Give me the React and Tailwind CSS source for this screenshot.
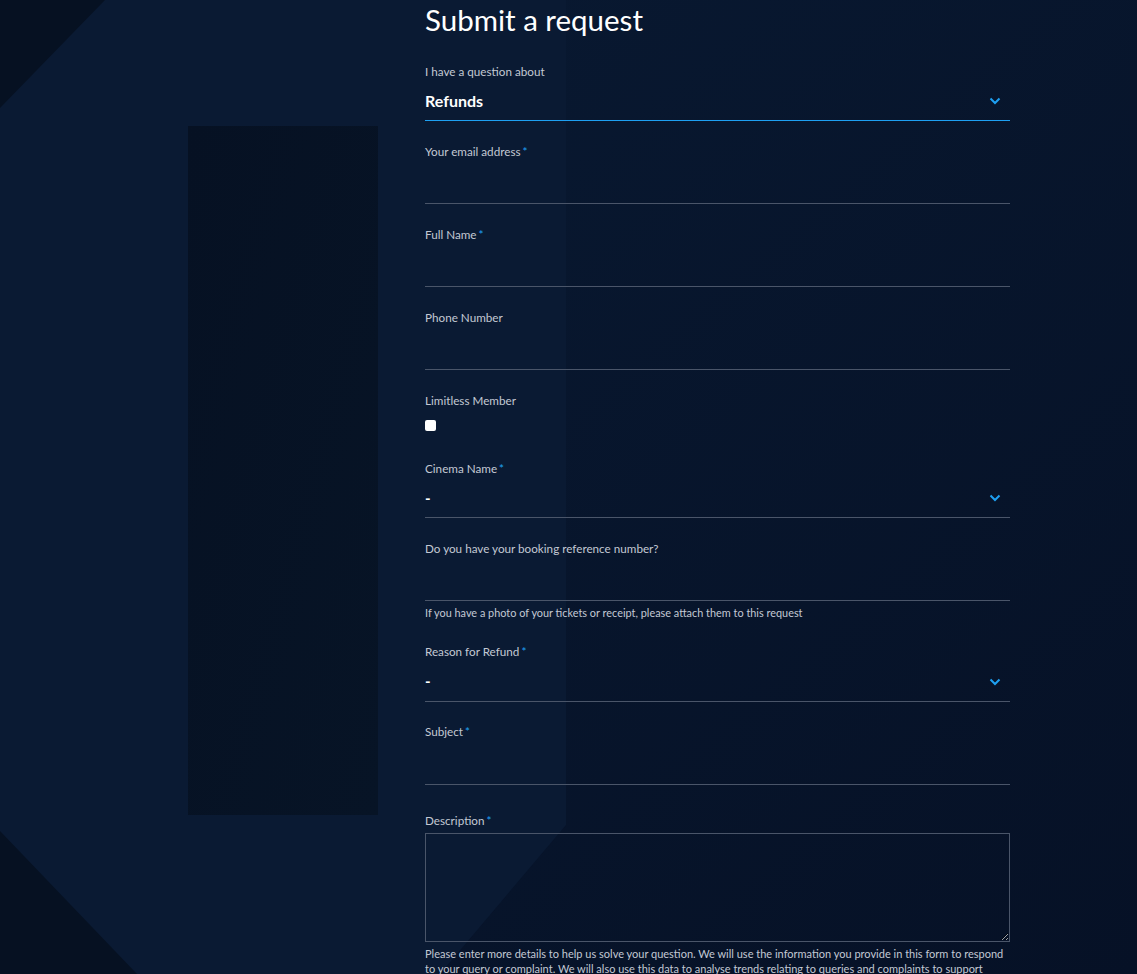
import React from "react";

const font = { fontFamily: "Lato, 'Noto Sans', sans-serif" };

function Chevron() {
  return (
    <svg width="12" height="8" viewBox="0 0 12 8" className="shrink-0">
      <polyline points="1.5,1.5 6,6 10.5,1.5" fill="none" stroke="#1ea0f2" strokeWidth="2" />
    </svg>
  );
}

function Label({ children, required }) {
  return (
    <label className="-mt-[1px] mb-[1px] block h-4 text-[11.7px] leading-4 text-[#c3c9d4]">
      {children}
      {required && <span className="ml-[2px] text-[#1ea0f2]">*</span>}
    </label>
  );
}

function TextField({ label, required }) {
  return (
    <div className="mb-[23px]">
      <Label required={required}>{label}</Label>
      <input type="text" className="block h-[44px] w-full border-b border-[#4a5569] bg-transparent text-white outline-none" />
    </div>
  );
}

function SelectField({ label, required, value, bold, blue, h = "h-[41px]" }) {
  return (
    <div className="mb-[23px]">
      <Label required={required}>{label}</Label>
      <div className={`flex ${h} w-full items-center justify-between pr-[9px] pt-[2px] ${blue ? "border-b border-[#1ea0f2]" : "border-b border-[#4a5569]"}`}>
        <span className={bold ? "text-[16px] font-bold text-white" : "text-[15px] font-bold text-white"}>{value}</span>
        <Chevron />
      </div>
    </div>
  );
}

export default function App() {
  return (
    <div className="relative min-h-[974px] w-full overflow-hidden bg-[#07152c]" style={font}>
      <svg className="absolute inset-0" width="1137" height="974" viewBox="0 0 1137 974" preserveAspectRatio="none">
        <defs>
          <linearGradient id="bg" x1="0" y1="0" x2="1" y2="1">
            <stop offset="0" stopColor="#091a33" />
            <stop offset="1" stopColor="#061126" />
          </linearGradient>
          <linearGradient id="rect" x1="0" y1="0" x2="1" y2="1">
            <stop offset="0" stopColor="#061123" />
            <stop offset="1" stopColor="#071426" />
          </linearGradient>
        </defs>
        <rect x="0" y="0" width="1137" height="974" fill="url(#bg)" />
        <polygon points="0,0 566,0 566,825 440,974 0,974" fill="#0a1a33" />
        <polygon points="0,0 105,0 0,108" fill="#061122" />
        <rect x="188" y="126" width="190" height="689" fill="url(#rect)" />
        <polygon points="0,831 137,974 0,974" fill="#061122" />
      </svg>

      <div className="relative w-[585px]" style={{ marginLeft: 425 }}>
        <h1 className="mt-[2px] h-[36px] text-[29.5px] leading-[36px] font-normal text-white">Submit a request</h1>
        <div className="mt-[26px]">
          <SelectField label="I have a question about" value="Refunds" bold blue />
          <TextField label="Your email address" required />
          <TextField label="Full Name" required />
          <TextField label="Phone Number" />
          <div className="mb-[30px]">
            <Label>Limitless Member</Label>
            <input type="checkbox" className="mt-[12px] block h-[11px] w-[11px] appearance-none rounded-[2px] bg-white" />
          </div>
          <SelectField label="Cinema Name" required value="-" />
          <div className="mb-[24px]">
            <Label>Do you have your booking reference number?</Label>
            <input type="text" className="block h-[44px] w-full border-b border-[#4a5569] bg-transparent outline-none" />
            <p className="mt-[5px] text-[10.9px] leading-[14px] text-[#c3c9d4]">If you have a photo of your tickets or receipt, please attach them to this request</p>
          </div>
          <SelectField label="Reason for Refund" required value="-" h="h-[42px]" />
          <div className="mb-[28px] -mt-[2px]">
            <Label required>Subject</Label>
            <input type="text" className="block h-[45px] w-full border-b border-[#4a5569] bg-transparent outline-none" />
          </div>
          <div>
            <Label required>Description</Label>
            <textarea className="mt-[5px] block h-[109px] w-full border border-[#4a5569] bg-transparent outline-none" />
            <p className="mt-[4px] text-[11px] leading-[15px] text-[#c3c9d4]">
              Please enter more details to help us solve your question. We will use the information you provide in this form to respond to your query or complaint. We will also use this data to analyse trends relating to queries and complaints to support improvements to our services.
            </p>
          </div>
        </div>
      </div>
    </div>
  );
}
